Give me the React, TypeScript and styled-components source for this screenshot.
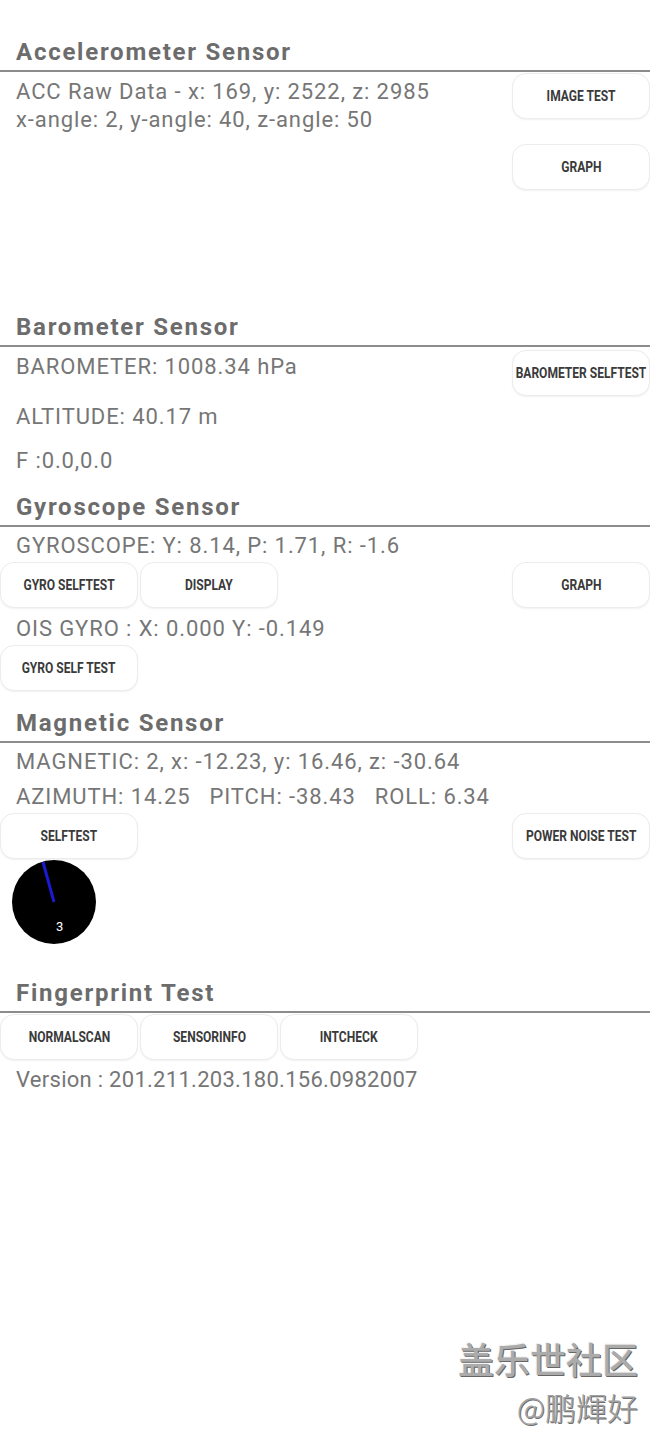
import React from "react";
import styled, { createGlobalStyle } from "styled-components";

const Global = createGlobalStyle`
  html, body { margin: 0; padding: 0; background: #fff; }
  body { font-family: Roboto, "Noto Sans", sans-serif; }
`;

const Page = styled.div`
  position: relative;
  width: 650px;
  height: 1444px;
  background: #fff;
  overflow: hidden;
`;

const Title = styled.h2<{ $top: number }>`
  margin: ${(p) => p.$top}px 0 3px;
  padding-left: 16px;
  font-size: 24px;
  line-height: 30px;
  font-weight: 700;
  letter-spacing: 1.75px;
  color: #6c6c6c;
`;

const Rule = styled.div`
  height: 2px;
  background: #8c8c8c;
`;

const Row = styled.div<{ $minH?: number }>`
  display: flex;
  justify-content: space-between;
  align-items: flex-start;
  min-height: ${(p) => (p.$minH ? `${p.$minH}px` : "auto")};
`;

const Col = styled.div<{ $gap?: number; $top?: number }>`
  display: flex;
  flex-direction: column;
  gap: ${(p) => p.$gap ?? 0}px;
  margin-top: ${(p) => p.$top ?? 0}px;
`;

const Value = styled.div<{ $top?: number; $ls?: number }>`
  margin-top: ${(p) => p.$top ?? 0}px;
  padding-left: 16px;
  font-size: 22px;
  line-height: 28px;
  font-weight: 400;
  letter-spacing: ${(p) => p.$ls ?? 0.9}px;
  color: #767676;
  white-space: pre;
`;

const Buttons = styled.div<{ $top?: number }>`
  display: flex;
  gap: 2px;
  margin-top: ${(p) => p.$top ?? 0}px;
`;

const Spacer = styled.div`
  flex: 1;
`;

const Btn = styled.button`
  box-sizing: border-box;
  width: 138px;
  height: 46px;
  padding: 0;
  border: 1px solid #ececec;
  border-radius: 14px;
  background: #fff;
  box-shadow: 0 1px 2px rgba(0, 0, 0, 0.06);
  display: flex;
  align-items: center;
  justify-content: center;
  overflow: visible;
`;

const BtnLabel = styled.span`
  display: inline-block;
  font-family: Roboto, sans-serif;
  font-weight: 700;
  font-size: 14px;
  color: #3a3a3a;
  white-space: nowrap;
  transform: scaleX(0.86);
`;

const Compass = styled.div`
  position: relative;
  width: 84px;
  height: 84px;
  margin: 1px 0 0 12px;
  border-radius: 50%;
  background: #000;
`;

const CompassSvg = styled.svg`
  display: block;
`;

const CompassLabel = styled.span`
  position: absolute;
  left: 44px;
  top: 59px;
  font-family: Roboto, sans-serif;
  font-size: 13px;
  color: #fff;
`;

const Watermark = styled.div`
  position: absolute;
  right: 12px;
  top: 1332px;
  display: flex;
  flex-direction: column;
  align-items: flex-end;
  font-family: "Noto Sans CJK SC", sans-serif;
`;

const WmMain = styled.div`
  font-size: 36px;
  line-height: 52px;
  font-weight: 500;
  color: #ababab;
  text-shadow: 1px 1px 0 #666, -1px -1px 0 #f2f2f2;
`;

const WmSub = styled.div`
  font-size: 31px;
  line-height: 45px;
  font-weight: 300;
  color: #a2a2a2;
  text-shadow: 1px 1px 0 #707070;
`;

const B = ({ children }: { children: React.ReactNode }) => (
  <Btn>
    <BtnLabel>{children}</BtnLabel>
  </Btn>
);

export default function App() {
  return (
    <Page>
      <Global />

      <Title $top={37}>Accelerometer Sensor</Title>
      <Rule />
      <Row $minH={240}>
        <Col $top={6}>
          <Value>ACC Raw Data - x: 169, y: 2522, z: 2985</Value>
          <Value>x-angle: 2, y-angle: 40, z-angle: 50</Value>
        </Col>
        <Col $top={1} $gap={25}>
          <B>IMAGE TEST</B>
          <B>GRAPH</B>
        </Col>
      </Row>

      <Title $top={0}>Barometer Sensor</Title>
      <Rule />
      <Row>
        <Value $top={6}>BAROMETER: 1008.34 hPa</Value>
        <Col $top={3}>
          <B>BAROMETER SELFTEST</B>
        </Col>
      </Row>
      <Value $top={7}>ALTITUDE: 40.17 m</Value>
      <Value $top={16}>F :0.0,0.0</Value>

      <Title $top={17}>Gyroscope Sensor</Title>
      <Rule />
      <Value $top={5}>GYROSCOPE: Y: 8.14, P: 1.71, R: -1.6</Value>
      <Buttons $top={2}>
        <B>GYRO SELFTEST</B>
        <B>DISPLAY</B>
        <Spacer />
        <B>GRAPH</B>
      </Buttons>
      <Value $top={7}>OIS GYRO : X: 0.000 Y: -0.149</Value>
      <Buttons $top={2}>
        <B>GYRO SELF TEST</B>
      </Buttons>

      <Title $top={17}>Magnetic Sensor</Title>
      <Rule />
      <Value $top={5}>MAGNETIC: 2, x: -12.23, y: 16.46, z: -30.64</Value>
      <Value $top={7}>AZIMUTH: 14.25   PITCH: -38.43   ROLL: 6.34</Value>
      <Buttons $top={2}>
        <B>SELFTEST</B>
        <Spacer />
        <B>POWER NOISE TEST</B>
      </Buttons>
      <Compass>
        <CompassSvg width="84" height="84" viewBox="0 0 84 84">
          <line x1="31" y1="2" x2="42" y2="42" stroke="#1a1ad0" strokeWidth="3" />
        </CompassSvg>
        <CompassLabel>3</CompassLabel>
      </Compass>

      <Title $top={34}>Fingerprint Test</Title>
      <Rule />
      <Buttons $top={1}>
        <B>NORMALSCAN</B>
        <B>SENSORINFO</B>
        <B>INTCHECK</B>
      </Buttons>
      <Value $top={6} $ls={0.28}>Version : 201.211.203.180.156.0982007</Value>

      <Watermark>
        <WmMain>盖乐世社区</WmMain>
        <WmSub>@鹏輝好</WmSub>
      </Watermark>
    </Page>
  );
}
